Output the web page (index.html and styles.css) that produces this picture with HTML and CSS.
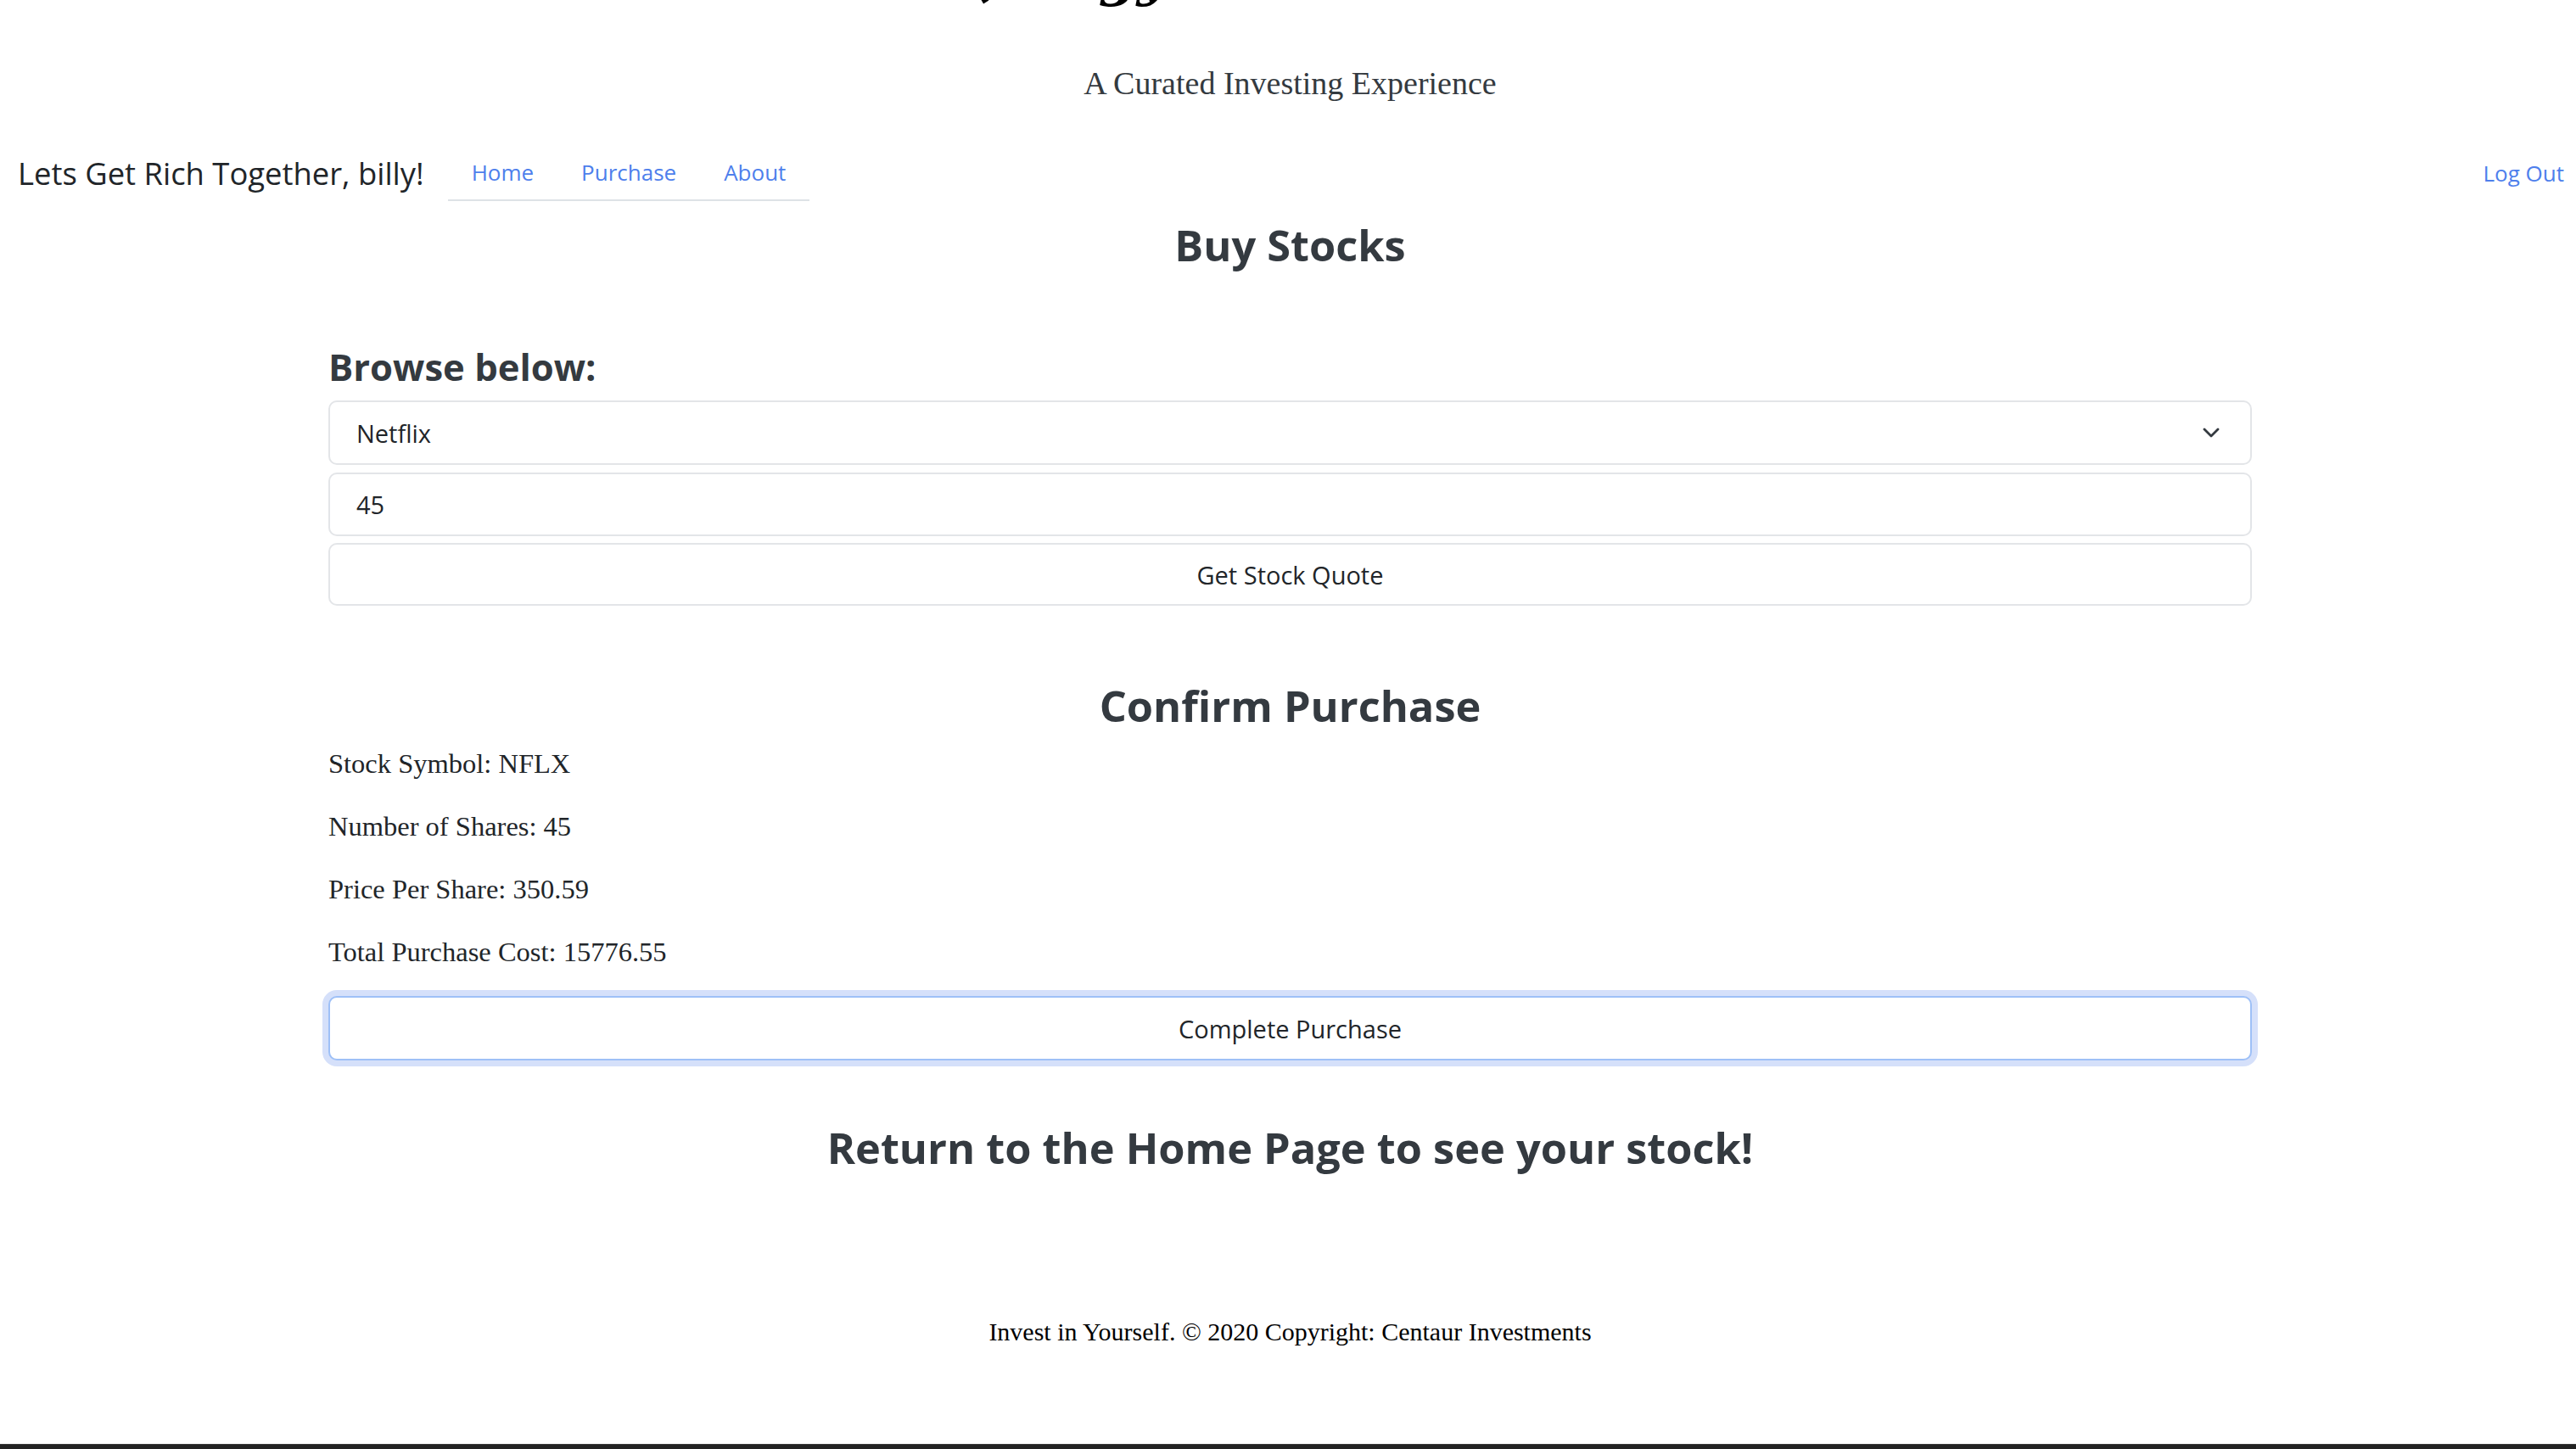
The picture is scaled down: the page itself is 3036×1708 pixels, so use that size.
FILE: index.html
```html
<!DOCTYPE html>
<html lang="en">
<head>
<meta charset="utf-8">
<title>Buy Stocks</title>
<link rel="stylesheet" href="styles.css">
</head>
<body>
<div class="page">
  <header class="masthead">
    <h1 class="title">Welcome, Edgy Investor and Trader</h1>
    <p class="tagline">A Curated Investing Experience</p>
  </header>

  <nav class="navbar">
    <span class="brand">Lets Get Rich Together, billy!</span>
    <ul class="tabs">
      <li><a class="tab" href="#">Home</a></li>
      <li><a class="tab" href="#">Purchase</a></li>
      <li><a class="tab" href="#">About</a></li>
    </ul>
    <a class="logout" href="#">Log Out</a>
  </nav>

  <main class="container">
    <h2 class="heading heading-buy">Buy Stocks</h2>
    <h3 class="subheading">Browse below:</h3>
    <div class="field field-select">
      <span>Netflix</span>
      <svg class="chevron" viewBox="0 0 20 13" width="20" height="13" aria-hidden="true"><path d="M2 2 L10 10 L18 2" fill="none" stroke="#343a40" stroke-width="2.8" stroke-linecap="round" stroke-linejoin="round"/></svg>
    </div>
    <div class="field field-input">45</div>
    <button class="btn btn-quote">Get Stock Quote</button>

    <h2 class="heading heading-confirm">Confirm Purchase</h2>
    <p class="detail detail-first">Stock Symbol: NFLX</p>
    <p class="detail">Number of Shares: 45</p>
    <p class="detail">Price Per Share: 350.59</p>
    <p class="detail">Total Purchase Cost: 15776.55</p>
    <button class="btn btn-focus">Complete Purchase</button>

    <h2 class="heading heading-return">Return to the Home Page to see your stock!</h2>
  </main>

  <footer class="footer">Invest in Yourself. © 2020 Copyright: Centaur Investments</footer>
  <div class="darkbar"></div>
</div>
</body>
</html>
```

FILE: styles.css
```css
html, body {
  margin: 0;
  padding: 0;
  overflow: hidden;
  background: #ffffff;
}

body {
  font-family: "Liberation Serif", "DejaVu Serif", serif;
  color: #212529;
}

.page {
  width: 3041px;
  height: 1708px;
  display: flex;
  flex-direction: column;
}

.masthead {
  text-align: center;
}

.title {
  margin: -60px 0 0;
  padding-right: 96px;
  font: italic 700 64px/64px "DejaVu Serif", serif;
  color: #000000;
  white-space: nowrap;
}

.tagline {
  margin: 70px 0 0;
  font-size: 38px;
  line-height: 48px;
  color: #343a40;
}

.navbar {
  display: flex;
  align-items: center;
  height: 66px;
  margin-top: 49px;
  padding: 0 19px 0 21px;
  font-family: "Open Sans", "Noto Sans", sans-serif;
}

.brand {
  font-size: 36.4px;
  color: #212529;
  margin-right: 28px;
}

.tabs {
  display: flex;
  align-self: stretch;
  list-style: none;
  margin: 0;
  padding: 0;
  border-bottom: 2px solid #dee2e6;
}

.tabs li {
  display: flex;
}

.tab {
  display: flex;
  align-items: center;
  padding: 0 28px;
  font-size: 26px;
  color: #4e7fec;
  text-decoration: none;
}

.logout {
  margin-left: auto;
  font-size: 26px;
  color: #4e7fec;
  text-decoration: none;
}

.container {
  width: 2267px;
  margin-left: 387px;
  display: flex;
  flex-direction: column;
}

.heading {
  margin: 0;
  font-family: "Open Sans", "Noto Sans", sans-serif;
  font-weight: 700;
  font-size: 50.5px;
  line-height: 64px;
  color: #343a40;
  text-align: center;
}

.heading-buy { margin-top: 20px; }
.heading-confirm { margin-top: 86px; }
.heading-return { margin-top: 71px; }

.subheading {
  margin: 84px 0 0;
  font-family: "Open Sans", "Noto Sans", sans-serif;
  font-weight: 700;
  font-size: 43.6px;
  line-height: 55px;
  color: #343a40;
}

.field {
  box-sizing: border-box;
  display: flex;
  align-items: center;
  justify-content: space-between;
  padding: 0 36px 0 31px;
  border: 2px solid #e3e5e8;
  border-radius: 10px;
  font-family: "Open Sans", "Noto Sans", sans-serif;
  font-size: 29px;
  color: #212529;
  background: #ffffff;
}

.field-select {
  height: 76px;
  margin-top: 12px;
}

.field-input {
  height: 75px;
  margin-top: 9px;
}

.chevron {
  display: block;
}

.btn {
  box-sizing: border-box;
  display: block;
  width: 100%;
  border: 2px solid #e3e5e8;
  border-radius: 10px;
  background: #ffffff;
  font-family: "Open Sans", "Noto Sans", sans-serif;
  font-size: 29px;
  color: #212529;
  text-align: center;
  padding: 0;
}

.btn-quote {
  height: 74px;
  margin-top: 8px;
}

.btn-focus {
  height: 76px;
  margin-top: 28px;
  border-color: #9ec0f7;
  box-shadow: 0 0 0 7px #d5e0fa;
}

.detail {
  margin: 0 0 27px;
  font-size: 32.5px;
  line-height: 47px;
}

.detail-first {
  margin-top: 13px;
}

.detail:last-of-type {
  margin-bottom: 0;
}

.footer {
  margin-top: 165px;
  text-align: center;
  font-size: 30px;
  line-height: 40px;
  color: #000000;
}

.darkbar {
  margin-top: auto;
  height: 6px;
  box-sizing: border-box;
  border-top: 1px solid #3a3a3a;
  background: #222222;
}
```
